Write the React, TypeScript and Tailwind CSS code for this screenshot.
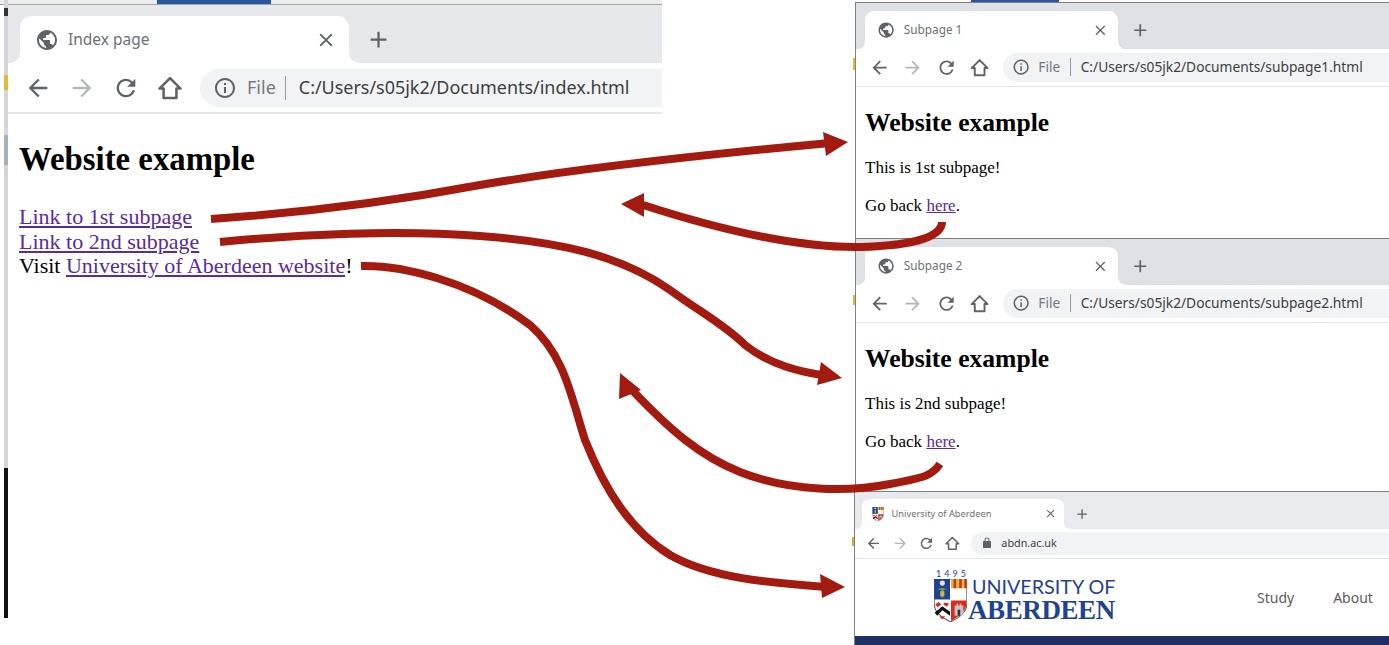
const UI_FONT = "font-['Noto_Sans',sans-serif]";
const PAGE_FONT = "font-['Liberation_Serif',serif]";
const LINK = "text-[#5b2a9d] underline";

const Icon = ({ d, className }: { d: string; className: string }) => (
  <svg viewBox="0 0 24 24" className={className} fill="currentColor">
    <path d={d} />
  </svg>
);

const ICONS = {
  globe:
    "M12 2C6.48 2 2 6.48 2 12s4.48 10 10 10 10-4.48 10-10S17.52 2 12 2zm-1 17.93c-3.95-.49-7-3.85-7-7.93 0-.62.08-1.21.21-1.79L9 15v1c0 1.1.9 2 2 2v1.93zm6.9-2.54c-.26-.81-1-1.39-1.9-1.39h-1v-3c0-.55-.45-1-1-1H8v-2h2c.55 0 1-.45 1-1V7h2c1.1 0 2-.9 2-2v-.41c2.93 1.19 5 4.06 5 7.41 0 2.08-.8 3.97-2.1 5.39z",
  close:
    "M19 6.41L17.59 5 12 10.59 6.41 5 5 6.41 10.59 12 5 17.59 6.41 19 12 13.41 17.59 19 19 17.59 13.41 12z",
  plus: "M19 13h-6v6h-2v-6H5v-2h6V5h2v6h6v2z",
  back: "M20 11H7.83l5.59-5.59L12 4l-8 8 8 8 1.41-1.41L7.83 13H20v-2z",
  forward: "M12 4l-1.41 1.41L16.17 11H4v2h12.17l-5.58 5.59L12 20l8-8z",
  reload:
    "M17.65 6.35A7.958 7.958 0 0012 4c-4.42 0-7.99 3.58-7.99 8s3.57 8 7.99 8c3.73 0 6.84-2.55 7.73-6h-2.08A5.99 5.99 0 0112 18c-3.31 0-6-2.69-6-6s2.69-6 6-6c1.66 0 3.14.69 4.22 1.78L13 11h7V4l-2.35 2.35z",
  info:
    "M11 7h2v2h-2zm0 4h2v6h-2zm1-9C6.48 2 2 6.48 2 12s4.48 10 10 10 10-4.48 10-10S17.52 2 12 2zm0 18c-4.41 0-8-3.59-8-8s3.59-8 8-8 8 3.59 8 8-3.59 8-8 8z",
  lock:
    "M18 8h-1V6c0-2.76-2.24-5-5-5S7 3.24 7 6v2H6c-1.1 0-2 .9-2 2v10c0 1.1.9 2 2 2h12c1.1 0 2-.9 2-2V10c0-1.1-.9-2-2-2zm-3 0H9V6c0-1.66 1.34-3 3-3s3 1.34 3 3v2z",
};

const Shield = ({ className }: { className: string }) => (
  <svg viewBox="0 0 32 42" className={className}>
    <path d="M0 0H32V24C32 33 24 38 16 42C8 38 0 33 0 24Z" fill="#fff" stroke="#555" strokeWidth="1" />
    <path d="M0 0H15.5V20H0Z" fill="#1f4390" />
    <path d="M16.5 0H32V9H16.5Z" fill="#e8b830" />
    <path d="M19 0H21.5V9H19ZM24.5 0H27V9H24.5ZM29.5 0H32V9H29.5Z" fill="#c8352b" />
    <circle cx="8" cy="4" r="2.5" fill="#e9e6d8" />
    <path d="M3 11C6 8 10 8 13 11C10 10 9 11 9 12V18H7V12C7 11 6 10 3 11Z" fill="#7d9a4a" />
    <path d="M6 12H10V17H6Z" fill="#d9b648" />
    <path d="M16.5 21H31.5V24C31.5 31 25 36 16.5 41Z" fill="#e0281c" />
    <path d="M1 25L4.5 22.5L7 25L3.5 27.5ZM10 23L14.5 24L12.5 27L9 25Z" fill="#e0281c" />
    <path d="M0.5 33L8 26.5L15.5 32V36L8 30.5L3 36Z" fill="#111" />
    <path d="M5 36.5H11L8 39.5Z" fill="#e0281c" />
    <path d="M20 26H22V24H23.5V26H25V24H26.5V26H28.5V36H20Z" fill="#c4c4c4" />
    <path d="M23 30H25.5V36H23Z" fill="#333" />
  </svg>
);

type BarProps = {
  title: string;
  zoomClass: string;
  stripClass: string;
  stripHeight: string;
  tabSize: string;
  titleGap?: string;
  toolbarPad: string;
  sepGap?: string;
  urlSize?: string;
  address: string;
  secure?: boolean;
  favicon?: boolean;
};

// drawn at the size of the big window, the smaller ones only zoom it down
const BrowserBar = ({
  title,
  zoomClass,
  stripClass,
  stripHeight,
  tabSize,
  titleGap = "ml-[12px]",
  toolbarPad,
  sepGap = "ml-[9px]",
  urlSize = "text-[18.1px]",
  address,
  secure,
  favicon,
}: BarProps) => (
  <div className={`${UI_FONT} ${zoomClass} shrink-0`}>
    <div className={`${stripClass} ${stripHeight} pl-3 flex items-end`}>
      <div className={`relative ${tabSize} bg-white rounded-t-[12px] flex items-center pl-[17px] pr-[12px]`}>
        <span className="absolute left-[-10px] bottom-0 w-[10px] h-[10px] bg-white" />
        <span className={`absolute left-[-10px] bottom-0 w-[10px] h-[10px] rounded-br-[10px] ${stripClass}`} />
        <span className="absolute right-[-10px] bottom-0 w-[10px] h-[10px] bg-white" />
        <span className={`absolute right-[-10px] bottom-0 w-[10px] h-[10px] rounded-bl-[10px] ${stripClass}`} />
        {favicon ? (
          <Shield className="w-[20px] h-[24px]" />
        ) : (
          <Icon d={ICONS.globe} className="w-[24px] h-[24px] -ml-[2px] text-[#5f6368]" />
        )}
        <span className={`${titleGap} flex-1 text-[15.5px] text-[#6b7076] whitespace-nowrap`}>{title}</span>
        <Icon d={ICONS.close} className="w-[22px] h-[22px] text-[#5f6368]" />
      </div>
      <Icon d={ICONS.plus} className="ml-[16px] mb-[10px] w-[27px] h-[27px] text-[#5f6368]" />
    </div>
    <div className={`h-[49px] bg-white flex items-center ${toolbarPad} border-b-2 border-[#e5e6e7] box-content`}>
      <Icon d={ICONS.back} className="w-[28px] h-[28px] text-[#5f6368]" />
      <Icon d={ICONS.forward} className="ml-[16px] w-[28px] h-[28px] text-[#b5b8bb]" />
      <Icon d={ICONS.reload} className="ml-[16px] w-[28px] h-[28px] text-[#5f6368]" />
      <svg
        viewBox="0 0 24 24"
        className="ml-[16px] w-[28px] h-[28px] text-[#5f6368]"
        fill="none"
        stroke="currentColor"
        strokeWidth="2.2"
        strokeLinejoin="round"
      >
        <path d="M12 3.5L3 12.5H6.5V20.5H17.5V12.5H21Z" />
      </svg>
      <div className="ml-[16px] flex-1 h-[38px] bg-[#f1f3f4] rounded-l-full flex items-center pl-[13px]">
        {secure ? (
          <>
            <Icon d={ICONS.lock} className="ml-[4px] w-[20px] h-[20px] text-[#5f6368]" />
            <span className="ml-[14px] text-[18px] text-[#3c4043] whitespace-nowrap">{address}</span>
          </>
        ) : (
          <>
            <Icon d={ICONS.info} className="w-[24px] h-[24px] text-[#5f6368]" />
            <span className="ml-[10px] text-[18px] text-[#75797e]">File</span>
            <span className={`${sepGap} w-px h-[24px] bg-[#9a9da0]`} />
            <span className={`ml-[13px] ${urlSize} text-[#3c4043] whitespace-nowrap`}>{address}</span>
          </>
        )}
      </div>
    </div>
  </div>
);

const SubPage = ({ nth, href }: { nth: string; href: string }) => (
  <div className={`${PAGE_FONT} text-black pl-[9px] pt-[22px] text-[17px] leading-[18px]`}>
    <h1 className="text-[25.6px] leading-[28px] font-bold">Website example</h1>
    <p className="mt-[22px]">This is {nth} subpage!</p>
    <p className="mt-[20px]">
      Go back <a href={href} className={LINK}>here</a>.
    </p>
  </div>
);

const Arrow = ({ d, head }: { d: string; head: string }) => (
  <>
    <path d={d} fill="none" stroke="#a31a10" strokeWidth="8" />
    <polygon points={head} fill="#a31a10" />
  </>
);

const App = () => {
  return (
    <div className="relative w-[1389px] h-[645px] bg-white overflow-hidden">
      {/* bits of the desktop behind the windows */}
      <div className="absolute left-0 top-0 w-[662px] h-[5px] bg-[#ececec] border-b border-[#a5a5a5]">
        <div className="absolute left-[157px] top-0 w-[114px] h-[4px] bg-[#2b579a]" />
      </div>
      <div className="absolute left-[4px] top-0 w-[4px] h-[618px] bg-[#d6d6d6] flex flex-col">
        <div className="h-[8px]" />
        <div className="h-[8px] bg-[#333]" />
        <div className="h-[59px]" />
        <div className="h-[15px] bg-[#e3b93c]" />
        <div className="h-[45px]" />
        <div className="h-[30px] bg-[#a5b1bf]" />
        <div className="flex-1" />
        <div className="h-[150px] bg-[#111]" />
      </div>
      <div className="absolute left-[971px] top-0 w-[88px] h-[2px] bg-[#2b579a]" />
      <div className="absolute left-[971px] top-[236px] w-[88px] h-[2px] bg-[#2b3a55]" />
      <div className="absolute left-[853px] top-[58px] w-[2px] h-[12px] bg-[#e3b93c]" />
      <div className="absolute left-[853px] top-[295px] w-[2px] h-[10px] bg-[#e3b93c]" />
      <div className="absolute left-[852px] top-[537px] w-[2px] h-[9px] bg-[#d0ab45]" />

      <div className="absolute left-[8px] top-[5px] w-[654px] h-[613px] bg-white">
        <BrowserBar
          title="Index page"
          zoomClass=""
          stripClass="bg-[#e6e8eb]"
          stripHeight="h-[58px]"
          tabSize="w-[329px] h-[47px]"
          titleGap="ml-[9px]"
          toolbarPad="pl-[16px]"
          urlSize="text-[17.95px]"
          address="C:/Users/s05jk2/Documents/index.html"
        />
        <div className={`${PAGE_FONT} text-black pl-[11px] pt-[27px] text-[22px] leading-[24.5px]`}>
          <h1 className="text-[32.8px] leading-[36px] font-bold">Website example</h1>
          <div className="mt-[28px]">
            <a href="#1" className={LINK}>Link to 1st subpage</a>
          </div>
          <div>
            <a href="#2" className={LINK}>Link to 2nd subpage</a>
          </div>
          <div>
            Visit <a href="#3" className={LINK}>University of Aberdeen website</a>!
          </div>
        </div>
      </div>

      <div className="absolute left-[855px] top-[2px] w-[534px] h-[236px] bg-white border-l border-t border-[#808080]">
        <BrowserBar
          title="Subpage 1"
          zoomClass="[zoom:0.76]"
          stripClass="bg-[#dee1e6]"
          stripHeight="h-[60px]"
          tabSize="w-[333px] h-[49px]"
          toolbarPad="pl-[17px]"
          sepGap="ml-[13px]"
          address="C:/Users/s05jk2/Documents/subpage1.html"
        />
        <SubPage nth="1st" href="#back1" />
      </div>

      <div className="absolute left-[855px] top-[238px] w-[534px] h-[253px] bg-white border-l border-t border-[#808080]">
        <BrowserBar
          title="Subpage 2"
          zoomClass="[zoom:0.76]"
          stripClass="bg-[#dee1e6]"
          stripHeight="h-[60px]"
          tabSize="w-[333px] h-[49px]"
          toolbarPad="pl-[17px]"
          sepGap="ml-[13px]"
          address="C:/Users/s05jk2/Documents/subpage2.html"
        />
        <SubPage nth="2nd" href="#back2" />
      </div>

      <div className="absolute left-[854px] top-[491px] w-[535px] h-[154px] bg-white border-l border-t border-[#808080] flex flex-col">
        <BrowserBar
          title="University of Aberdeen"
          zoomClass="[zoom:0.6]"
          stripClass="bg-[#e8eaed]"
          stripHeight="h-[61px]"
          tabSize="w-[337px] h-[49px]"
          toolbarPad="pl-[17px]"
          address="abdn.ac.uk"
          secure
          favicon
        />
        <div className="flex-1 flex items-start pl-[79px] pt-[10px]">
          <div className="w-[183px] flex items-start">
            <div className="w-[33px] shrink-0">
              <div className="pl-[2px] text-[9px] leading-[10px] tracking-[3px] text-[#1f4390] whitespace-nowrap font-['Lato',sans-serif]">1495</div>
              <Shield className="w-[33px] h-[43px]" />
            </div>
            <div className="mt-[9px] ml-px text-[#1f4390] whitespace-nowrap">
              <div className="ml-[4px] text-[19.7px] leading-[18px] font-['Lato',sans-serif]">UNIVERSITY OF</div>
              <div className="text-[27px] leading-[28px] font-bold tracking-[-0.4px] font-['Liberation_Serif',serif]">ABERDEEN</div>
            </div>
          </div>
          <div className={`${UI_FONT} ml-[140px] mt-[18px] flex gap-[39px] text-[14px] text-[#5c5c5c]`}>
            <span>Study</span>
            <span>About</span>
          </div>
        </div>
        <div className="h-[9px] bg-[#1f2f66]" />
      </div>

      <svg className="absolute inset-0 pointer-events-none" width="1389" height="645" viewBox="0 0 1389 645">
        <Arrow
          d="M211 219C300 213 400 200 480 185C580 168 700 155 830 143"
          head="823,132 848,142 826,156"
        />
        <Arrow
          d="M220 242C300 234 400 230 480 236C560 242 620 255 670 290C700 312 725 325 745 345C770 365 800 372 828 376"
          head="821,362 842,378 817,385"
        />
        <Arrow
          d="M361 266C400 265 470 280 530 325C565 355 572 400 585 440C605 490 630 530 670 555C710 578 770 583 826 587"
          head="820,574 845,587 822,598"
        />
        <Arrow
          d="M942 222C942 240 900 246 860 247C800 248 720 230 640 204"
          head="644,193 621,204 644,217"
        />
        <Arrow
          d="M940 464C930 478 920 478 890 484C850 492 790 492 740 472C700 456 670 430 632 390"
          head="641,390 620,373 619,399"
        />
      </svg>
    </div>
  );
};

export default App;
